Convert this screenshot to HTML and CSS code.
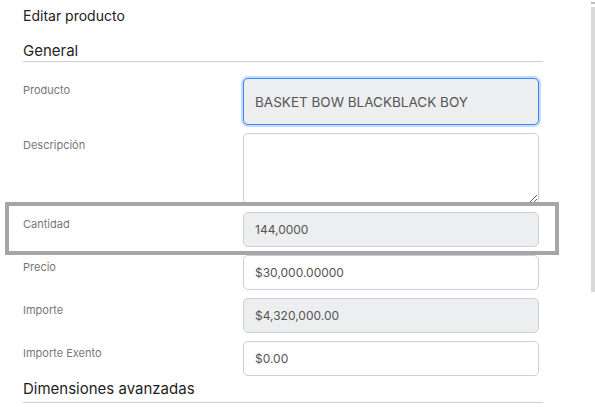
FILE: index.html
```html
<!DOCTYPE html>
<html lang="es">
<head>
  <meta charset="UTF-8">
  <title>Editar producto</title>
  <meta name="viewport" content="width=device-width, initial-scale=1">
  <link rel="stylesheet" href="styles.css">
</head>
<body>

<div class="pagina">
  <h1 class="titulo">Editar producto</h1>

  <h2 class="seccion">General</h2>

  <div class="campos">
    <div class="fila">
      <label>Producto</label>
      <input type="text" class="enfocado" value="BASKET BOW BLACKBLACK BOY" readonly>
    </div>
    <div class="fila">
      <label>Descripción</label>
      <textarea></textarea>
    </div>
    <div class="fila marcada">
      <label>Cantidad</label>
      <input type="text" value="144,0000" disabled>
      <span class="marco"></span>
    </div>
    <div class="fila">
      <label>Precio</label>
      <input type="text" value="$30,000.00000">
    </div>
    <div class="fila">
      <label>Importe</label>
      <input type="text" value="$4,320,000.00" disabled>
    </div>
    <div class="fila">
      <label>Importe Exento</label>
      <input type="text" value="$0.00">
    </div>
  </div>

  <h2 class="seccion seccion-final">Dimensiones avanzadas</h2>
</div>

<!-- barra de scroll -->
<div class="scroll"><span class="scroll-tope"></span><span class="scroll-barra"></span></div>

</body>
</html>
```

FILE: styles.css
```css
body {
  margin: 0;
  background: white;
  font-family: Inter, "Open Sans", sans-serif;
  color: #222;
  overflow: hidden;
}
.pagina {
  width: 520px;
  padding: 6px 0 0 23px;
}
.titulo {
  margin: 0;
  font-size: 14px;
  font-weight: 400;
  line-height: 20px;
}
.seccion {
  margin: 15px 0 0;
  font-size: 15px;
  font-weight: 400;
  line-height: 20px;
  color: #1e1e1e;
  border-bottom: 1px solid #cfcfcf;
}
.seccion-final {
  margin-top: 3px;
  padding-bottom: 3px;
}
.campos {
  display: flex;
  flex-direction: column;
  gap: 8px;
  margin-top: 16px;
}
.fila {
  display: grid;
  grid-template-columns: 220px 296px;
  position: relative;
}
.fila label {
  font-size: 11px;
  color: #777;
  line-height: 14px;
  padding-top: 5px;
}
.fila input, .fila textarea {
  box-sizing: border-box;
  width: 296px;
  height: 35px;
  margin: 0;
  padding: 0 11px;
  font-family: inherit;
  font-size: 12px;
  color: #555;
  background: white;
  border: 1px solid #ccd0d6;
  border-radius: 5px;
  outline: none;
}
.fila input:disabled {
  background: #eceef0;
  color: #555;
}
.fila textarea {
  height: 71px;
  resize: vertical;
}
.fila input.enfocado {
  height: 47px;
  font-size: 13.5px;
  background: #eceef0;
  border: 1px solid #3a86f3;
  box-shadow: 0 0 0 2px #c4dcfc;
}
.marco {
  position: absolute;
  left: -18px;
  right: -16px;
  top: -10px;
  bottom: -8px;
  border: 4px solid #a6a6a6;
  pointer-events: none;
}
.scroll {
  position: fixed;
  top: 0;
  right: 0;
  width: 4px;
  height: 100%;
}
.scroll-tope {
  display: block;
  height: 2px;
  margin-top: 2px;
  background: #bdbdbd;
}
.scroll-barra {
  display: block;
  margin-top: 3px;
  height: 285px;
  background: #d9d9d9;
}
```
